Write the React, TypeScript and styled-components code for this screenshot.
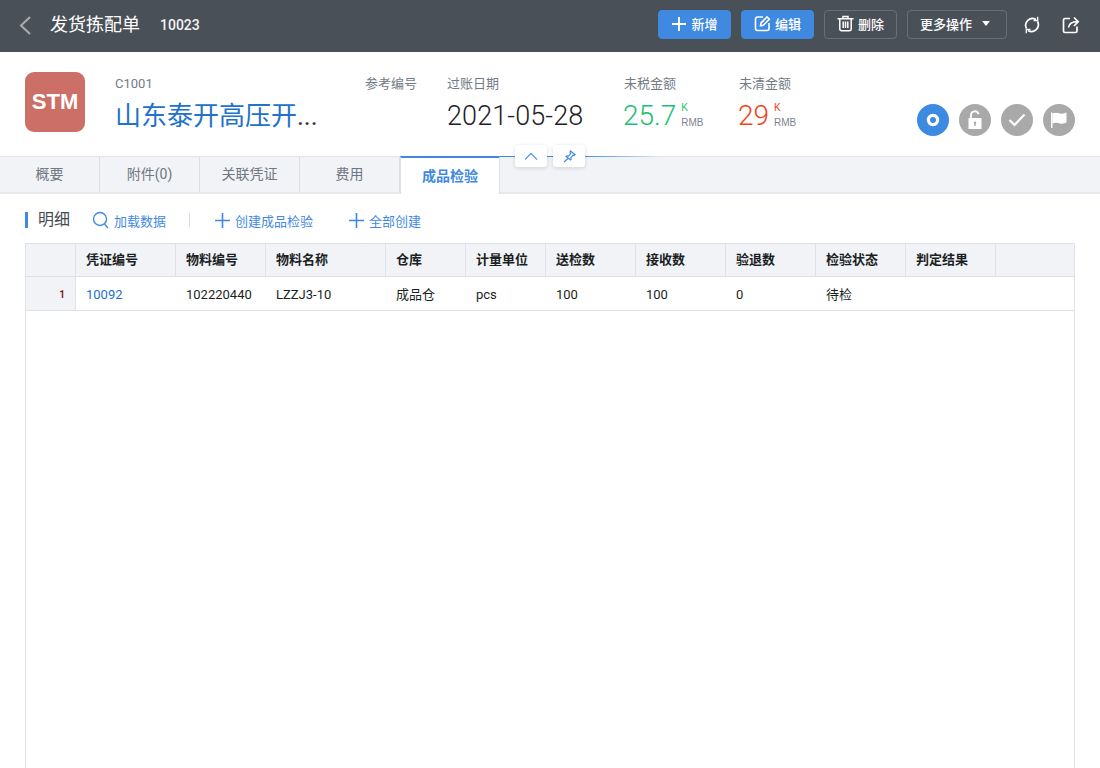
import * as React from "react";
import styled, { createGlobalStyle } from "styled-components";

const GlobalStyle = createGlobalStyle`
    html, body { margin: 0; padding: 0; height: 100%; overflow: hidden; }
    body { font-family: Roboto, "Noto Sans CJK SC", sans-serif; background: #fff; }
    #root { height: 100%; }
`;

const Page = styled.div`
    display: flex;
    flex-direction: column;
    width: 1100px;
    height: 768px;
    overflow: hidden;
`;

const TopBar = styled.div`
    display: flex;
    align-items: center;
    height: 52px;
    flex-shrink: 0;
    box-sizing: border-box;
    background: #4a5058;
    padding: 0 20px 3px 18px;
    color: #fff;
`;
const Back = styled.span`
    display: flex;
    width: 32px;
    color: #a9adb2;
`;
const Title = styled.div`
    font-size: 18px;
    line-height: 24px;
    color: #fff;
`;
const DocNo = styled.div`
    font-size: 14px;
    font-weight: 500;
    margin-left: 20px;
    flex: 1;
    color: #f2f3f4;
`;
const ActionButton = styled.button<{ $primary?: boolean; $width: number; $right?: number }>`
    display: flex;
    align-items: center;
    justify-content: center;
    gap: 4px;
    box-sizing: border-box;
    width: ${p => p.$width}px;
    height: 29px;
    margin-right: 10px;
    padding: 0 ${p => p.$right ?? 0}px 2px 0;
    border-radius: 4px;
    border: 1px solid ${p => (p.$primary ? "#3f8ae0" : "#66707c")};
    background: ${p => (p.$primary ? "#3f8ae0" : "transparent")};
    color: #fff;
    font-family: inherit;
    font-size: 13px;
    font-weight: 500;
`;
const Caret = styled.span`
    width: 0;
    height: 0;
    margin-left: 6px;
    border-left: 4.5px solid transparent;
    border-right: 4.5px solid transparent;
    border-top: 5px solid #fff;
`;
const BarIcon = styled.span`
    display: flex;
    width: 18px;
    justify-content: center;
    margin-left: 6px;
    margin-right: 14px;
    &:last-child { margin-right: 0; margin-left: 7px; }
`;

const Header = styled.div`
    display: flex;
    height: 104px;
    flex-shrink: 0;
    box-sizing: border-box;
    padding: 20px 25px 0;
    background: #fff;
`;
const Logo = styled.div`
    display: flex;
    align-items: center;
    justify-content: center;
    width: 60px;
    height: 60px;
    border-radius: 9px;
    background: #cc6f67;
    color: #fff;
    font-size: 22px;
    font-weight: 700;
    font-family: "Liberation Sans", sans-serif;
`;
const Field = styled.div<{ $width: number; $left?: number }>`
    width: ${p => p.$width}px;
    margin-left: ${p => p.$left ?? 0}px;
    flex-shrink: 0;
`;
const FieldLabel = styled.div`
    font-size: 13px;
    line-height: 24px;
    color: #737b86;
`;
const CompanyName = styled.div`
    margin-top: 2px;
    width: 205px;
    font-size: 26px;
    line-height: 36px;
    color: #2272c9;
    white-space: nowrap;
    overflow: hidden;
    text-overflow: ellipsis;
    & > i { font-style: normal; color: #333; }
`;
const DateValue = styled.div`
    margin-top: 2px;
    font-size: 27px;
    font-weight: 300;
    line-height: 36px;
    letter-spacing: 0.1px;
    color: #1d2127;
`;
const Amount = styled.div`
    display: flex;
    align-items: center;
    margin-top: 1px;
    height: 36px;
`;
const AmountValue = styled.span<{ $color: string }>`
    font-size: 28px;
    font-weight: 300;
    margin-left: -1px;
    color: ${p => p.$color};
`;
const AmountUnit = styled.span`
    display: flex;
    flex-direction: column;
    margin-left: 5px;
    font-family: "Liberation Sans", sans-serif;
    font-size: 10px;
    line-height: 15px;
    color: #7d848e;
`;
const AmountK = styled.span<{ $color: string }>`
    color: ${p => p.$color};
`;
const StatusRow = styled.div`
    display: flex;
    gap: 10px;
    margin-left: auto;
    margin-top: 32px;
    align-self: flex-start;
`;
const StatusDot = styled.div<{ $active?: boolean }>`
    display: flex;
    align-items: center;
    justify-content: center;
    width: 32px;
    height: 32px;
    border-radius: 50%;
    background: ${p => (p.$active ? "#3c8ae2" : "#a9a9a9")};
`;

const Tabs = styled.div`
    position: relative;
    display: flex;
    height: 38px;
    flex-shrink: 0;
    box-sizing: border-box;
    background: #f1f3f7;
    border-top: 1px solid #e3e5ec;
    border-bottom: 2px solid #e8e9ee;
`;
const Tab = styled.div<{ $active?: boolean }>`
    width: 100px;
    box-sizing: border-box;
    height: ${p => (p.$active ? "38px" : "35px")};
    margin-top: ${p => (p.$active ? "-1px" : "0")};
    line-height: ${p => (p.$active ? "36px" : "35px")};
    text-align: center;
    font-size: 14px;
    color: ${p => (p.$active ? "#3f8ae0" : "#6f7782")};
    font-weight: ${p => (p.$active ? 700 : 400)};
    background: ${p => (p.$active ? "#fff" : "transparent")};
    border-top: ${p => (p.$active ? "2px solid #3f8ae0" : "none")};
    border-right: 1px solid #dcdfe6;
    border-left: ${p => (p.$active ? "1px solid #dcdfe6" : "none")};
    position: relative;
    z-index: 1;
`;
const TabLine = styled.div`
    position: absolute;
    left: 500px;
    top: -1px;
    width: 160px;
    height: 1px;
    background: linear-gradient(to right, #3f8ae0 50%, rgba(63, 138, 224, 0));
`;
const Floating = styled.div<{ $left: number }>`
    position: absolute;
    left: ${p => p.$left}px;
    top: -12px;
    z-index: 2;
    display: flex;
    align-items: center;
    justify-content: center;
    width: 32px;
    height: 22px;
    background: #fff;
    border-radius: 3px;
    box-shadow: 0 1px 4px rgba(0, 0, 0, 0.14);
`;

const Body = styled.div`
    flex: 1;
    display: flex;
    flex-direction: column;
    min-height: 0;
    padding: 0 25px;
`;
const Toolbar = styled.div`
    display: flex;
    align-items: center;
    height: 49px;
    box-sizing: border-box;
    padding-top: 3px;
    flex-shrink: 0;
`;
const SectionTitle = styled.div`
    border-left: 3px solid #3f8ae0;
    height: 16px;
    line-height: 16px;
    padding-left: 10px;
    font-size: 16px;
    color: #444a52;
`;
const ToolLink = styled.div<{ $left?: number }>`
    display: flex;
    align-items: center;
    gap: 4px;
    margin-left: ${p => p.$left ?? 0}px;
    font-size: 13px;
    color: #3f8ae0;
`;
const ToolDivider = styled.div`
    width: 1px;
    height: 14px;
    background: #d8dade;
    margin: 0 24px 0 23px;
`;
const TableBox = styled.div`
    flex: 1;
    border: 1px solid #dfe1e8;
    border-bottom: none;
`;
const Row = styled.div<{ $head?: boolean }>`
    display: flex;
    height: ${p => (p.$head ? 32 : 33)}px;
    border-bottom: 1px solid #dfe1e8;
    background: ${p => (p.$head ? "#f1f3f7" : "#fff")};
`;
const Cell = styled.div<{ $width: number; $head?: boolean; $link?: boolean }>`
    width: ${p => p.$width}px;
    box-sizing: border-box;
    padding-left: 10px;
    line-height: ${p => (p.$head ? 31 : 36)}px;
    font-size: 13px;
    font-weight: ${p => (p.$head ? 700 : 400)};
    color: ${p => (p.$link ? "#2272c9" : "#1b1f24")};
    border-right: ${p => (p.$head ? "1px solid #dfe1e8" : "none")};
    white-space: nowrap;
`;
const IndexCell = styled.div`
    width: 50px;
    box-sizing: border-box;
    padding-right: 10px;
    text-align: right;
    line-height: 35px;
    font-size: 10px;
    font-weight: 700;
    color: #8a1f1f;
    background: #f1f3f7;
    border-right: 1px solid #dfe1e8;
`;

const columns: { name: string; width: number; value: string; link?: boolean }[] = [
    { name: "凭证编号", width: 100, value: "10092", link: true },
    { name: "物料编号", width: 90, value: "102220440" },
    { name: "物料名称", width: 120, value: "LZZJ3-10" },
    { name: "仓库", width: 80, value: "成品仓" },
    { name: "计量单位", width: 80, value: "pcs" },
    { name: "送检数", width: 90, value: "100" },
    { name: "接收数", width: 90, value: "100" },
    { name: "验退数", width: 90, value: "0" },
    { name: "检验状态", width: 90, value: "待检" },
    { name: "判定结果", width: 90, value: "" },
];

const tabs = ["概要", "附件(0)", "关联凭证", "费用", "成品检验"];

const PlusIcon = ({ size = 16, color = "#fff", weight = 1.5 }: { size?: number; color?: string; weight?: number }) => (
    <svg width={size} height={size} viewBox="0 0 16 16" fill="none" stroke={color} strokeWidth={weight}>
        <path d="M8 1v14M1 8h14" />
    </svg>
);

export default function App() {
    return <Page>
        <GlobalStyle />
        <TopBar>
            <Back>
                <svg width="14" height="20" viewBox="0 0 14 20" fill="none" stroke="currentColor" strokeWidth="2"><path d="M12 2L3 10.500l9 8.500" /></svg>
            </Back>
            <Title>发货拣配单</Title>
            <DocNo>10023</DocNo>
            <ActionButton $primary $width={73}><PlusIcon weight={1.8} />新增</ActionButton>
            <ActionButton $primary $width={73}>
                <svg width="17" height="17" viewBox="0 0 17 17" fill="none" stroke="#fff" strokeWidth="1.6"><path d="M9 2H3.500A2 2 0 0 0 1.500 4v9.500a2 2 0 0 0 2 2H13a2 2 0 0 0 2-2V8" /><path d="M6.500 10.800l.5-2.800 6-6 2.300 2.300-6 6z" /></svg>
                编辑
            </ActionButton>
            <ActionButton $width={73}>
                <svg width="17" height="17" viewBox="0 0 17 17" fill="none" stroke="#fff" strokeWidth="1.5"><path d="M.5 3.700h16M6 3.500V1.500h5v2M2.800 3.700v10a2 2 0 0 0 2 2h7.400a2 2 0 0 0 2-2v-10M6.200 6.500v6.500M8.500 6.500v6.500M10.800 6.500v6.500" /></svg>
                删除
            </ActionButton>
            <ActionButton $width={100} $right={4}>更多操作<Caret /></ActionButton>
            <BarIcon>
                <svg width="18" height="18" viewBox="0 0 18 18" fill="none" stroke="#fff" strokeWidth="1.7"><path d="M3.500 12.500A6.800 6.800 0 0 1 13 3.500" /><path d="M14.500 5.500A6.800 6.800 0 0 1 5 14.500" /><path d="M10.500 4.500h4.200V.8M7.500 13.500H3.300v3.700" strokeWidth="1.300" /></svg>
            </BarIcon>
            <BarIcon>
                <svg width="18" height="18" viewBox="0 0 18 18" fill="none" stroke="#fff" strokeWidth="1.7"><path d="M8 2.500H3A1.500 1.500 0 0 0 1.500 4v11A1.500 1.500 0 0 0 3 16.500h10.500A1.500 1.500 0 0 0 15 15v-4.500" /><path d="M6.500 11.500c.5-3.500 3-5.800 9-5.800M12 1.500l4.200 4.200L12 10" /></svg>
            </BarIcon>
        </TopBar>
        <Header>
            <Logo>STM</Logo>
            <Field $width={250} $left={30}>
                <FieldLabel>C1001</FieldLabel>
                <CompanyName>山东泰开高压开<i>...</i></CompanyName>
            </Field>
            <Field $width={82}><FieldLabel>参考编号</FieldLabel></Field>
            <Field $width={177}>
                <FieldLabel>过账日期</FieldLabel>
                <DateValue>2021-05-28</DateValue>
            </Field>
            <Field $width={115}>
                <FieldLabel>未税金额</FieldLabel>
                <Amount>
                    <AmountValue $color="#1bbf6f">25.7</AmountValue>
                    <AmountUnit><AmountK $color="#1bbf6f">K</AmountK>RMB</AmountUnit>
                </Amount>
            </Field>
            <Field $width={100}>
                <FieldLabel>未清金额</FieldLabel>
                <Amount>
                    <AmountValue $color="#f2401c">29</AmountValue>
                    <AmountUnit><AmountK $color="#f2401c">K</AmountK>RMB</AmountUnit>
                </Amount>
            </Field>
            <StatusRow>
                <StatusDot $active>
                    <svg width="14" height="14" viewBox="0 0 14 14" fill="none" stroke="#fff" strokeWidth="3.200"><circle cx="7" cy="7" r="4.600" /></svg>
                </StatusDot>
                <StatusDot>
                    <svg width="16" height="20" viewBox="0 0 16 20" fill="none"><path d="M4 8.500V5a3.800 3.800 0 0 1 7.500-.800" stroke="#fff" strokeWidth="1.800" /><path fillRule="evenodd" d="M1.500 8h13v11h-13zM8 11.500a1.300 1.300 0 0 0-.7 2.400V16h1.400v-2.100a1.300 1.300 0 0 0-.7-2.400z" fill="#fff" /></svg>
                </StatusDot>
                <StatusDot>
                    <svg width="18" height="14" viewBox="0 0 18 14" fill="none" stroke="#fff" strokeWidth="2.200"><path d="M1.500 7l5 5 10-10.500" /></svg>
                </StatusDot>
                <StatusDot>
                    <svg width="18" height="18" viewBox="0 0 18 18" fill="#fff"><path d="M1 1.500h1.500V17H1z" /><path d="M2.500 2.500c3-1.500 5-.5 7.500 0 2.500.5 4.500 0 6.500-1v10c-2 1-4 1.500-6.500 1-2.500-.5-4.500-1.500-7.500 0z" /></svg>
                </StatusDot>
            </StatusRow>
        </Header>
        <Tabs>
            {tabs.map((t, i) => <Tab key={t} $active={i === 4}>{t}</Tab>)}
            <TabLine />
            <Floating $left={515}>
                <svg width="14" height="9" viewBox="0 0 14 9" fill="none" stroke="#5b9be6" strokeWidth="1.300"><path d="M1 7.500l6-6 6 6" /></svg>
            </Floating>
            <Floating $left={553}>
                <svg width="13" height="13" viewBox="0 0 13 13" fill="none" stroke="#3f8ae0" strokeWidth="1.200"><path d="M7.500 1l4.500 3.500-1 1-1-.300-2 2.500c.3 1 .2 1.700-.4 2.300L3 6.500c.7-.6 1.400-.7 2.300-.4L7.800 3.600 7 2.300zM5 8.500L1 12" /></svg>
            </Floating>
        </Tabs>
        <Body>
            <Toolbar>
                <SectionTitle>明细</SectionTitle>
                <ToolLink $left={22}>
                    <svg width="18" height="18" viewBox="0 0 18 18" fill="none" stroke="#3f8ae0" strokeWidth="1.400"><circle cx="8" cy="8" r="6.500" /><path d="M12.500 13l3.500 4" /></svg>
                    加载数据
                </ToolLink>
                <ToolDivider />
                <ToolLink><PlusIcon size={17} color="#3f8ae0" />创建成品检验</ToolLink>
                <ToolLink $left={35}><PlusIcon size={17} color="#3f8ae0" />全部创建</ToolLink>
            </Toolbar>
            <TableBox>
                <Row $head>
                    <IndexCell />
                    {columns.map(c => <Cell key={c.name} $width={c.width} $head>{c.name}</Cell>)}
                </Row>
                <Row>
                    <IndexCell>1</IndexCell>
                    {columns.map(c => <Cell key={c.name} $width={c.width} $link={c.link}>{c.value}</Cell>)}
                </Row>
            </TableBox>
        </Body>
    </Page>;
}
